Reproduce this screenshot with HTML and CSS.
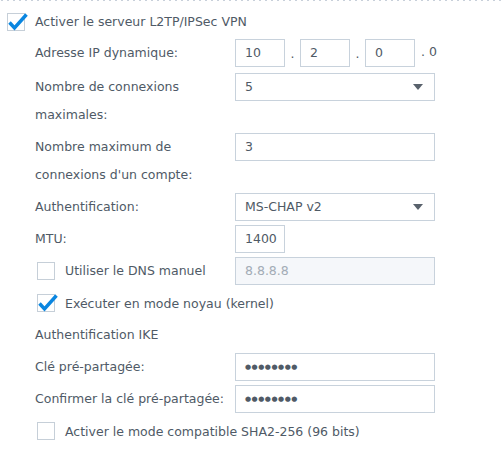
FILE: index.html
```html
<!DOCTYPE html>
<html lang="fr">
<head>
<meta charset="utf-8">
<link rel="stylesheet" href="styles.css">
</head>
<body>
<div class="panel">
  <div class="dotline"></div>
  <div class="form">
    <label class="check-row top">
      <span class="cb"><svg width="18" height="18" viewBox="0 0 18 18"><rect x="0.5" y="0.5" width="17" height="17" fill="#fff" stroke="#c6cfd8"/><path d="M2.5 9.5 L7.5 15 L19.5 1.5" fill="none" stroke="#0a86e0" stroke-width="3.4" stroke-linejoin="miter"/></svg></span>
      <span>Activer le serveur L2TP/IPSec VPN</span>
    </label>
    <div class="sub">
      <div class="row">
        <div class="lbl">Adresse IP dynamique:</div>
        <div class="ip">
          <span class="input small">10</span><span class="dot">.</span>
          <span class="input small">2</span><span class="dot">.</span>
          <span class="input small">0</span><span class="dot last">. 0</span>
        </div>
      </div>
      <div class="row">
        <div class="lbl">Nombre de connexions maximales:</div>
        <div class="select"><span>5</span><span class="arrow"></span></div>
      </div>
      <div class="row">
        <div class="lbl">Nombre maximum de connexions d'un compte:</div>
        <div class="input">3</div>
      </div>
      <div class="row">
        <div class="lbl">Authentification:</div>
        <div class="select"><span>MS-CHAP v2</span><span class="arrow"></span></div>
      </div>
      <div class="row">
        <div class="lbl">MTU:</div>
        <div class="input small">1400</div>
      </div>
      <div class="row">
        <label class="lbl check-row inner">
          <span class="cb"><svg width="18" height="18" viewBox="0 0 18 18"><rect x="0.5" y="0.5" width="17" height="17" fill="#fff" stroke="#c6cfd8"/></svg></span>
          <span>Utiliser le DNS manuel</span>
        </label>
        <div class="input disabled">8.8.8.8</div>
      </div>
      <div class="row">
        <label class="check-row inner">
          <span class="cb"><svg width="18" height="18" viewBox="0 0 18 18"><rect x="0.5" y="0.5" width="17" height="17" fill="#fff" stroke="#c6cfd8"/><path d="M2.5 9.5 L7.5 15 L19.5 1.5" fill="none" stroke="#0a86e0" stroke-width="3.4"/></svg></span>
          <span>Exécuter en mode noyau (kernel)</span>
        </label>
      </div>
      <div class="row section">
        <div class="lbl">Authentification IKE</div>
      </div>
      <div class="row">
        <div class="lbl">Clé pré-partagée:</div>
        <div class="input pw">●●●●●●●●</div>
      </div>
      <div class="row">
        <div class="lbl">Confirmer la clé pré-partagée:</div>
        <div class="input pw">●●●●●●●●</div>
      </div>
      <div class="row">
        <label class="check-row inner">
          <span class="cb"><svg width="18" height="18" viewBox="0 0 18 18"><rect x="0.5" y="0.5" width="17" height="17" fill="#fff" stroke="#c6cfd8"/></svg></span>
          <span>Activer le mode compatible SHA2-256 (96 bits)</span>
        </label>
      </div>
    </div>
  </div>
</div>
</body>
</html>
```
FILE: styles.css
```css
html, body {
  margin: 0;
  padding: 0;
  background: #fff;
}
body {
  font-family: "DejaVu Sans", Verdana, sans-serif;
  font-size: 12.5px;
  color: #4f5a66;
}
.panel {
  width: 501px;
}
.dotline {
  height: 1px;
  background-image: linear-gradient(to right, #c8d0da 2px, transparent 2px);
  background-size: 6px 1px;
  background-repeat: repeat-x;
  background-position: 1px 0;
}
.form {
  padding: 7px 0 0 7px;
}
.check-row {
  display: flex;
  align-items: center;
  gap: 10px;
  height: 27px;
}
.cb {
  width: 18px;
  height: 18px;
  display: block;
  flex: none;
}
.cb svg {
  display: block;
  overflow: visible;
}
.sub {
  padding-left: 28px;
  padding-top: 4px;
  display: flex;
  flex-direction: column;
  gap: 4px;
}
.row {
  display: flex;
  align-items: flex-start;
  min-height: 28px;
}
.row.section {
  min-height: 24px;
  line-height: 24px;
}
.lbl {
  width: 200px;
  flex: none;
  line-height: 28px;
}
.check-row.inner {
  padding-left: 2px;
  height: 28px;
  width: 198px;
}
.row > .check-row.inner:only-child {
  width: auto;
}
.input, .select {
  box-sizing: border-box;
  height: 28px;
  width: 200px;
  border: 1px solid #c8d2dc;
  padding-left: 9px;
  line-height: 26px;
  background: #fff;
}
.input.small {
  width: 50px;
}
.input.disabled {
  background: #f5f7fa;
  color: #a3acb6;
}
.input.pw {
  font-size: 7px;
  letter-spacing: 0.5px;
  color: #505a66;
}
.select {
  display: flex;
  justify-content: space-between;
  align-items: center;
  padding-right: 11px;
}
.arrow {
  width: 0;
  height: 0;
  border-left: 5px solid transparent;
  border-right: 5px solid transparent;
  border-top: 6px solid #59626c;
}
.ip {
  display: flex;
  align-items: flex-start;
}
.dot {
  width: 15px;
  text-align: center;
  line-height: 30px;
}
.dot.last {
  width: auto;
  padding-left: 6px;
  line-height: 26px;
}
```
